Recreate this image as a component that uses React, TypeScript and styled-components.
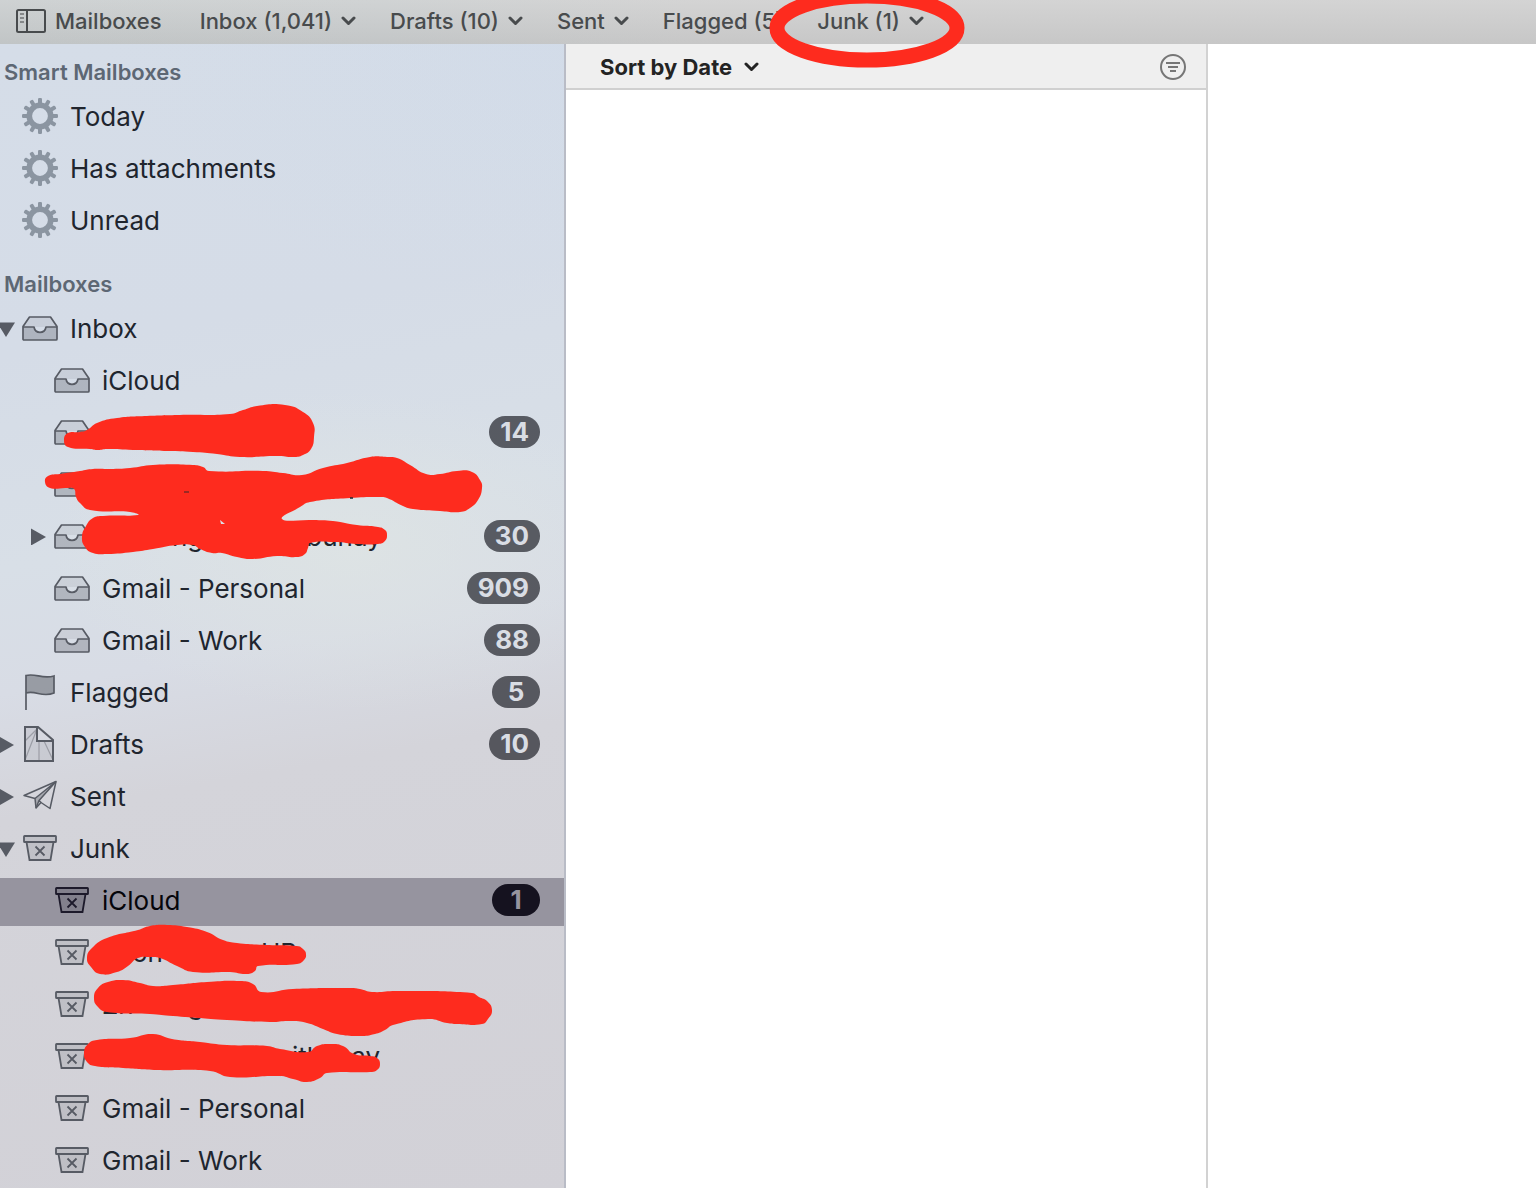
import React from "react";
import styled, { createGlobalStyle, css } from "styled-components";

const GlobalStyle = createGlobalStyle`
  * { box-sizing: border-box; }
  body {
    margin: 0;
    background: #fff;
    font-family: Inter, "Liberation Sans", sans-serif;
  }
  button { font: inherit; color: inherit; background: none; border: 0; padding: 0; cursor: pointer; }
  svg { display: block; flex: none; }
`;

const MARKER = "#fe2b1e";

const Window = styled.div`
  position: relative;
  min-height: 100vh;
  display: flex;
  flex-direction: column;
  overflow: hidden;
`;

const Toolbar = styled.nav`
  height: 44px;
  padding: 0 16px;
  display: flex;
  align-items: center;
  gap: 34px;
  color: #484b4d;
  background:
    linear-gradient(180deg, rgba(255, 255, 255, 0.1), rgba(0, 0, 0, 0.04)),
    linear-gradient(90deg, #c9cdce 0%, #cbcecf 25%, #cfcfcf 45%, #cfcfcf 100%);
`;

const ToolbarButton = styled.button`
  height: 44px;
  padding-bottom: 2px;
  display: flex;
  align-items: center;
  gap: 9px;
  font-size: 22px;
  line-height: 24px;
  font-weight: 500;
  white-space: nowrap;
`;

const MailboxesToggle = styled(ToolbarButton)`
  margin-right: 4px;
`;

const Columns = styled.div`
  flex: 1;
  display: grid;
  grid-template-columns: 566px 642px minmax(0, 1fr);
`;

const Sidebar = styled.aside`
  border-right: 2px solid #b9bcc6;
  background:
    radial-gradient(ellipse 300px 160px at 62% 44%, rgba(223, 229, 227, 0.7), rgba(223, 229, 227, 0)),
    radial-gradient(ellipse 460px 260px at 100% 0%, rgba(208, 219, 233, 0.5), rgba(208, 219, 233, 0)),
    linear-gradient(170deg, #d5dde8 0%, #d5dce7 25%, #d8dfe7 42%, #d8dce5 52%, #d4d4da 62%, #d2d1d7 100%);
`;

const Section = styled.section`
  padding: 16px 0 10px;
`;

const SectionTitle = styled.h2`
  margin: 0 0 10px;
  padding-left: 4px;
  font-size: 22px;
  line-height: 24px;
  font-weight: 600;
  color: #5d6774;
`;

const MailboxList = styled.ul`
  margin: 0;
  padding: 0;
  list-style: none;
  display: flex;
  flex-direction: column;
  gap: 4px;
`;

const Row = styled.li<{ $selected?: boolean }>`
  height: 48px;
  padding: 0 24px 4px 0;
  display: flex;
  align-items: center;
  color: #20252e;
  ${(p) =>
    p.$selected &&
    css`
      color: #05050a;
      background: #96949f;
    `}
`;

const Slot = styled.div<{ $nested?: boolean }>`
  width: ${(p) => (p.$nested ? 54 : 22)}px;
  padding-right: 7px;
  flex: none;
  display: flex;
  justify-content: flex-end;
`;

const Disclosure = styled.button`
  color: #575b64;
`;

const MailboxButton = styled.button`
  flex: 1;
  min-width: 0;
  display: flex;
  align-items: center;
  gap: 12px;
  text-align: left;
`;

const IconTint = styled.span<{ $selected?: boolean }>`
  color: ${(p) => (p.$selected ? "#1d1a2b" : "#575b64")};
`;

const Label = styled.span`
  flex: 1;
  padding-top: 2px;
  display: flex;
  font-size: 26px;
  line-height: 32px;
  white-space: pre;
`;

const Fragment = styled.span<{ $lead: number }>`
  margin-left: ${(p) => p.$lead}px;
`;

const Badge = styled.span<{ $selected?: boolean }>`
  min-width: 48px;
  height: 32px;
  padding: 0 11px;
  border-radius: 16px;
  font-size: 26px;
  line-height: 32px;
  font-weight: 700;
  text-align: center;
  color: ${(p) => (p.$selected ? "#96949f" : "#d9dde4")};
  background: ${(p) => (p.$selected ? "#15121f" : "rgba(24, 26, 33, 0.67)")};
`;

const MessageColumn = styled.section`
  border-right: 2px solid #d2d2d2;
  background: #fff;
`;

const SortBar = styled.header`
  height: 46px;
  padding: 2px 20px 0 34px;
  display: flex;
  align-items: center;
  justify-content: space-between;
  border-bottom: 2px solid #d0d0d0;
  background: #efefef;
`;

const SortButton = styled.button`
  display: flex;
  align-items: center;
  gap: 12px;
  font-size: 22px;
  line-height: 24px;
  font-weight: 700;
  color: #232323;
`;

const FilterButton = styled.button`
  color: #767676;
`;

const Reader = styled.main`
  background: #fff;
`;

const Markup = styled.svg`
  position: absolute;
  top: 0;
  left: 0;
  pointer-events: none;
`;

const Chevron = () => (
  <svg width="15" height="10" viewBox="0 0 15 10" fill="none" stroke="currentColor" strokeWidth="3" strokeLinecap="round" strokeLinejoin="round" aria-hidden="true">
    <path d="M2 2 L7.5 7.5 L13 2" />
  </svg>
);

const PanelIcon = () => (
  <svg width="30" height="24" viewBox="0 0 30 24" fill="none" stroke="currentColor" strokeWidth="2" aria-hidden="true">
    <rect x="1" y="1" width="28" height="22" rx="1.5" />
    <path d="M11 1V23" />
    <path d="M4 5H8M4 9H8M4 13H8" strokeWidth="1.6" opacity="0.7" />
  </svg>
);

const FilterIcon = () => (
  <svg width="26" height="26" viewBox="0 0 26 26" fill="none" stroke="currentColor" strokeWidth="2" aria-hidden="true">
    <circle cx="13" cy="13" r="12" />
    <path d="M6 9H20M8 13H18M10 17H16" />
  </svg>
);

const GearIcon = () => (
  <svg width="36" height="36" viewBox="0 0 36 36" aria-hidden="true">
    <g fill="#8b95a1">
      {Array.from({ length: 12 }, (_, i) => (
        <rect key={i} x="16" y="0" width="4" height="7" rx="1.2" transform={`rotate(${i * 30} 18 18)`} />
      ))}
    </g>
    <circle cx="18" cy="18" r="10.7" fill="none" stroke="#8b95a1" strokeWidth="5.6" />
  </svg>
);

const TrayIcon = () => (
  <svg width="36" height="36" viewBox="0 0 36 36" aria-hidden="true">
    <path d="M1 17 L7.5 7 H28.5 L35 17 Z" fill="currentColor" opacity="0.1" />
    <path d="M1 17 H12 C12.500 20 14.500 22.300 18 22.300 C21.500 22.300 23.500 20 24 17 H35 V30 H1 Z" fill="currentColor" opacity="0.3" />
    <g fill="none" stroke="currentColor" strokeWidth="1.700" strokeLinejoin="round">
      <path d="M1 16.500 L7.500 7 H28.500 L35 16.500 V29 Q35 30 34 30 H2 Q1 30 1 29 Z" />
      <path d="M1 17 H12 C12.500 20 14.500 22.300 18 22.300 C21.500 22.300 23.500 20 24 17 H35" />
    </g>
  </svg>
);

const FlagIcon = () => (
  <svg width="36" height="36" viewBox="0 0 36 36" aria-hidden="true">
    <path d="M4 1.500 C14 -1 20 5.500 32 2 V19 C20 24 14 16 4 19 Z" fill="currentColor" opacity="0.5" />
    <path d="M4 36 V1.500 C14 -1 20 5.500 32 2 V19 C20 24 14 16 4 19" fill="none" stroke="currentColor" strokeWidth="1.700" />
  </svg>
);

const DraftIcon = () => (
  <svg width="36" height="36" viewBox="0 0 36 36" fill="none" aria-hidden="true">
    <path d="M3 1 H16 V15 H31 V35 H3 Z" fill="currentColor" opacity="0.1" />
    <path d="M15 3 L3 15 M15 3 L3 34 M17 15 V35 M22 15 L31 34" stroke="currentColor" strokeWidth="1.2" opacity="0.4" />
    <path d="M3 1 H16 L31 14 V35 H3 Z M15 1 V15 H31" stroke="currentColor" strokeWidth="2" />
  </svg>
);

const PlaneIcon = () => (
  <svg width="36" height="36" viewBox="0 0 36 36" fill="none" stroke="currentColor" strokeWidth="1.500" strokeLinejoin="round" aria-hidden="true">
    <path d="M13 21 L34 3.500 L17 22.500 L14 30 Z" fill="currentColor" fillOpacity="0.35" stroke="none" />
    <path d="M34 3.500 L2 17.500 L13 20.500 L14 30 L19 24.500 L28 30.500 Z" />
    <path d="M34 3.500 L13 20.500 M34 3.500 L17 22.500 L14 30 M17 22.500 L19 24.500" />
  </svg>
);

const JunkIcon = () => (
  <svg width="36" height="36" viewBox="0 0 36 36" fill="none" aria-hidden="true">
    <path d="M2 6 H34 V12 H31 L28.500 30 H7.500 L5 12 H2 Z" fill="currentColor" opacity="0.16" />
    <rect x="2" y="6" width="32" height="6" rx="0.6" stroke="currentColor" strokeWidth="1.800" />
    <path d="M4.500 12 L7.500 30 H28.500 L31.500 12" stroke="currentColor" strokeWidth="1.800" />
    <path d="M13.500 16.500 L22.500 25.500 M22.500 16.500 L13.500 25.500" stroke="currentColor" strokeWidth="1.800" />
  </svg>
);

const TriangleDown = () => (
  <svg width="18" height="18" viewBox="0 0 18 18" fill="currentColor" aria-hidden="true">
    <path d="M0 3.500 H18 L9 18 Z" />
  </svg>
);

const TriangleRight = () => (
  <svg width="16" height="18" viewBox="0 0 16 18" fill="currentColor" aria-hidden="true">
    <path d="M0 1.500 L15 10 L0 18.500 Z" />
  </svg>
);

const icons = {
  gear: GearIcon,
  tray: TrayIcon,
  flag: FlagIcon,
  draft: DraftIcon,
  plane: PlaneIcon,
  junk: JunkIcon,
};

type Piece = { text: string; lead: number };

type Mailbox = {
  label?: string;
  pieces?: Piece[];
  icon: keyof typeof icons;
  nested?: boolean;
  open?: boolean;
  count?: number;
  selected?: boolean;
};

const smartMailboxes: Mailbox[] = [
  { label: "Today", icon: "gear" },
  { label: "Has attachments", icon: "gear" },
  { label: "Unread", icon: "gear" },
];

const mailboxes: Mailbox[] = [
  { label: "Inbox", icon: "tray", open: true },
  { label: "iCloud", icon: "tray", nested: true },
  { icon: "tray", nested: true, count: 14 },
  { icon: "tray", nested: true },
  {
    icon: "tray",
    nested: true,
    open: false,
    count: 30,
    pieces: [
      { text: "ng", lead: 70 },
      { text: "bunay", lead: 103 },
    ],
  },
  { label: "Gmail - Personal", icon: "tray", nested: true, count: 909 },
  { label: "Gmail - Work", icon: "tray", nested: true, count: 88 },
  { label: "Flagged", icon: "flag", count: 5 },
  { label: "Drafts", icon: "draft", open: false, count: 10 },
  { label: "Sent", icon: "plane", open: false },
  { label: "Junk", icon: "junk", open: true },
  { label: "iCloud", icon: "junk", nested: true, count: 1, selected: true },
  {
    icon: "junk",
    nested: true,
    pieces: [
      { text: "on", lead: 30 },
      { text: "UB", lead: 98 },
    ],
  },
  {
    icon: "junk",
    nested: true,
    pieces: [
      { text: "Zh", lead: 0 },
      { text: "g", lead: 54 },
    ],
  },
  {
    icon: "junk",
    nested: true,
    pieces: [
      { text: "ith", lead: 190 },
      { text: "ay", lead: 29 },
    ],
  },
  { label: "Gmail - Personal", icon: "junk", nested: true },
  { label: "Gmail - Work", icon: "junk", nested: true },
];

const favourites = [
  { name: "Inbox (1,041)", menu: true },
  { name: "Drafts (10)", menu: true },
  { name: "Sent", menu: true },
  { name: "Flagged (5)", menu: false },
  { name: "Junk (1)", menu: true },
];

type Point = [number, number];

/* Closed smooth curve through a list of points. */
function smooth(points: Point[]): string {
  const n = points.length;
  let d = `M${points[0][0]} ${points[0][1]}`;
  for (let i = 0; i < n; i++) {
    const a = points[(i + n - 1) % n];
    const b = points[i];
    const c = points[(i + 1) % n];
    const e = points[(i + 2) % n];
    const len = Math.hypot(c[0] - b[0], c[1] - b[1]);
    const h1 = len / (len + Math.hypot(b[0] - a[0], b[1] - a[1]));
    const h2 = len / (len + Math.hypot(e[0] - c[0], e[1] - c[1]));
    const k = 0.5;
    d += ` C${b[0] + (c[0] - a[0]) * k * h1} ${b[1] + (c[1] - a[1]) * k * h1}`;
    d += ` ${c[0] - (e[0] - b[0]) * k * h2} ${c[1] - (e[1] - b[1]) * k * h2}`;
    d += ` ${c[0]} ${c[1]}`;
  }
  return d + "Z";
}

const strokes: Point[][] = [
  [
    [64, 440], [68, 433], [80, 432], [87, 430], [97, 423], [117, 418], [147, 416], [180, 415], [230, 414], [243, 410],
    [257, 406], [285, 405], [303, 412], [313, 423], [314, 437], [311, 449], [303, 455], [295, 457], [277, 456],
    [240, 457], [217, 454], [193, 452], [167, 451], [133, 450], [107, 449], [98, 450], [90, 449], [68, 447],
  ],
  [
    [45, 482], [48, 476], [60, 474], [80, 471], [93, 469], [110, 469], [130, 468], [153, 465], [193, 465], [203, 467],
    [209, 471], [263, 471], [283, 473], [302, 475], [323, 468], [347, 463], [370, 457], [387, 457], [397, 458],
    [410, 465], [426, 474], [440, 474], [457, 471], [472, 472], [480, 480], [482, 488], [478, 500], [470, 508],
    [460, 512], [440, 511], [413, 509], [403, 506], [387, 498], [380, 497], [350, 498], [310, 502], [300, 507],
    [282, 519], [313, 520], [333, 521], [357, 525], [378, 527], [385, 530], [387, 535], [385, 541], [378, 544],
    [357, 544], [335, 542], [310, 543], [308, 548], [305, 554], [297, 557], [277, 556], [253, 559], [237, 557],
    [222, 553], [212, 553], [200, 549], [193, 545], [177, 545], [153, 549], [133, 552], [107, 554], [93, 553],
    [85, 547], [82, 537], [86, 526], [93, 518], [103, 516], [138, 515], [130, 512], [90, 510], [80, 503], [76, 497],
    [74, 489], [67, 488], [50, 488],
  ],
  [
    [87, 958], [92, 948], [107, 938], [138, 930], [150, 926], [167, 925], [187, 927], [207, 932], [223, 940],
    [237, 943], [267, 945], [297, 946], [303, 949], [306, 954], [304, 960], [297, 964], [258, 966], [255, 971],
    [247, 974], [230, 972], [193, 972], [177, 966], [160, 958], [150, 957], [138, 958], [128, 966], [117, 972],
    [100, 974], [91, 967],
  ],
  [
    [94, 998], [98, 988], [108, 982], [123, 980], [140, 983], [153, 986], [173, 985], [207, 982], [240, 981],
    [253, 984], [261, 992], [293, 989], [350, 988], [360, 989], [372, 992], [397, 991], [472, 993], [479, 997],
    [487, 1001], [492, 1010], [488, 1019], [482, 1024], [457, 1024], [447, 1023], [428, 1019], [393, 1025],
    [385, 1030], [375, 1034], [360, 1036], [337, 1034], [323, 1029], [307, 1023], [290, 1021], [270, 1022],
    [227, 1020], [173, 1016], [150, 1014], [107, 1012], [98, 1007],
  ],
  [
    [84, 1053], [88, 1044], [97, 1040], [130, 1038], [153, 1034], [172, 1039], [200, 1042], [227, 1045], [267, 1046],
    [280, 1049], [308, 1052], [317, 1046], [330, 1044], [343, 1046], [354, 1054], [370, 1056], [377, 1058],
    [380, 1064], [377, 1070], [370, 1072], [327, 1073], [320, 1078], [307, 1082], [293, 1079], [280, 1076],
    [230, 1077], [210, 1071], [157, 1070], [123, 1068], [95, 1066], [87, 1062],
  ],
];

function MailboxRow({ box }: { box: Mailbox }) {
  const Icon = icons[box.icon];
  return (
    <Row $selected={box.selected}>
      <Slot $nested={box.nested}>
        {box.open !== undefined && (
          <Disclosure aria-expanded={box.open} aria-label="Toggle mailbox">
            {box.open ? <TriangleDown /> : <TriangleRight />}
          </Disclosure>
        )}
      </Slot>
      <MailboxButton>
        <IconTint $selected={box.selected}>
          <Icon />
        </IconTint>
        <Label>
          {box.label}
          {box.pieces?.map((piece) => (
            <Fragment key={piece.text} $lead={piece.lead}>
              {piece.text}
            </Fragment>
          ))}
        </Label>
        {box.count !== undefined && <Badge $selected={box.selected}>{box.count}</Badge>}
      </MailboxButton>
    </Row>
  );
}

export default function App() {
  return (
    <Window>
      <GlobalStyle />
      <Toolbar>
        <MailboxesToggle>
          <PanelIcon />
          Mailboxes
        </MailboxesToggle>
        {favourites.map((item) => (
          <ToolbarButton key={item.name}>
            {item.name}
            {item.menu && <Chevron />}
          </ToolbarButton>
        ))}
      </Toolbar>
      <Columns>
        <Sidebar>
          <Section>
            <SectionTitle>Smart Mailboxes</SectionTitle>
            <MailboxList>
              {smartMailboxes.map((box, i) => (
                <MailboxRow key={i} box={box} />
              ))}
            </MailboxList>
          </Section>
          <Section>
            <SectionTitle>Mailboxes</SectionTitle>
            <MailboxList>
              {mailboxes.map((box, i) => (
                <MailboxRow key={i} box={box} />
              ))}
            </MailboxList>
          </Section>
        </Sidebar>
        <MessageColumn>
          <SortBar>
            <SortButton>
              Sort by Date
              <Chevron />
            </SortButton>
            <FilterButton aria-label="Filter messages">
              <FilterIcon />
            </FilterButton>
          </SortBar>
        </MessageColumn>
        <Reader />
      </Columns>
      <Markup width="1000" height="1100" viewBox="0 0 1000 1100" aria-hidden="true">
        {strokes.map((points, i) => (
          <path key={i} d={smooth(points)} fill={MARKER} />
        ))}
        <path d="M220 520 L225 524 H221 Z" fill="#dcdfe5" />
        <path d="M184 492 H189" stroke="#7a2a26" strokeWidth="1.500" />
        <path d="M350 498 H353" stroke="#20252e" strokeWidth="1.500" />
        <ellipse cx="867" cy="28" rx="90" ry="32" fill="none" stroke={MARKER} strokeWidth="15" />
      </Markup>
    </Window>
  );
}
